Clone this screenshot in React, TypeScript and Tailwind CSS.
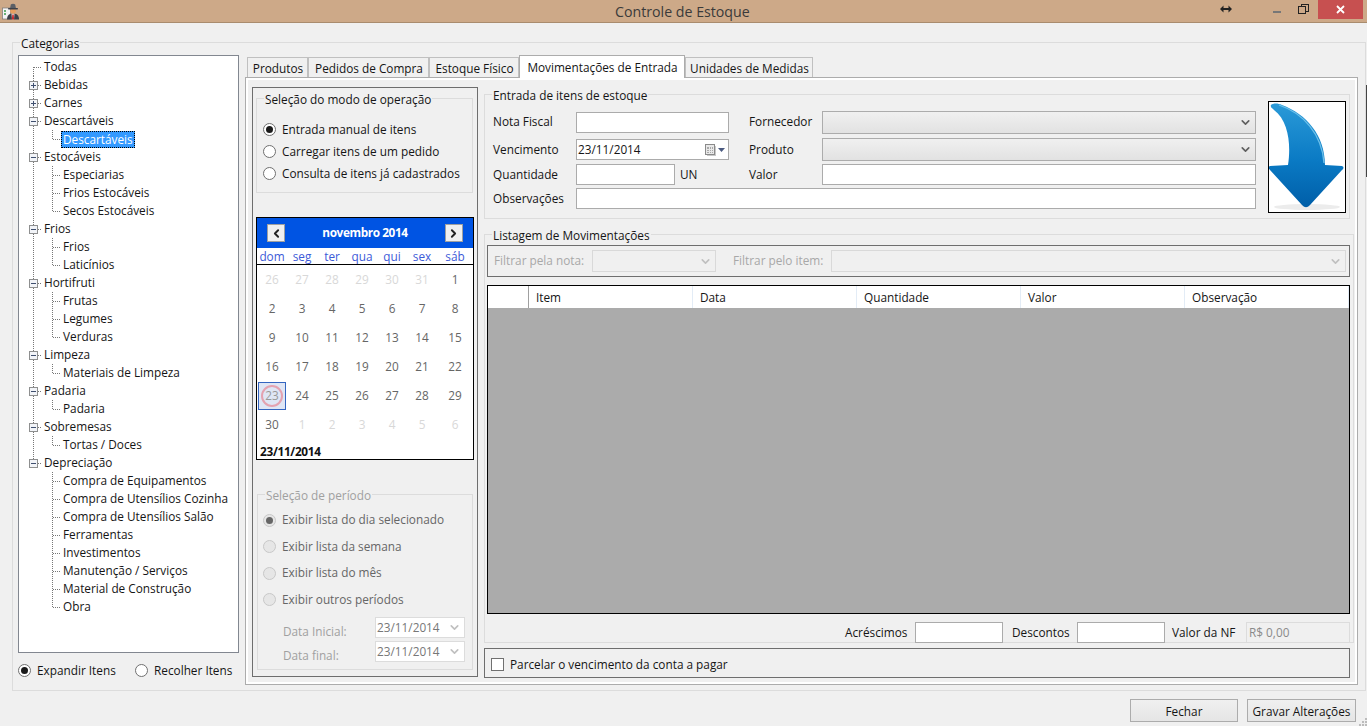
import { ReactNode } from "react";
import { ChevronDown, ChevronLeft, ChevronRight } from "lucide-react";

type Node = { name: string; box?: "+" | "-"; children?: string[] };

const tree: Node[] = [
  { name: "Todas" },
  { name: "Bebidas", box: "+" },
  { name: "Carnes", box: "+" },
  { name: "Descartáveis", box: "-", children: ["Descartáveis"] },
  { name: "Estocáveis", box: "-", children: ["Especiarias", "Frios Estocáveis", "Secos Estocáveis"] },
  { name: "Frios", box: "-", children: ["Frios", "Laticínios"] },
  { name: "Hortifruti", box: "-", children: ["Frutas", "Legumes", "Verduras"] },
  { name: "Limpeza", box: "-", children: ["Materiais de Limpeza"] },
  { name: "Padaria", box: "-", children: ["Padaria"] },
  { name: "Sobremesas", box: "-", children: ["Tortas / Doces"] },
  {
    name: "Depreciação",
    box: "-",
    children: [
      "Compra de Equipamentos",
      "Compra de Utensílios Cozinha",
      "Compra de Utensílios Salão",
      "Ferramentas",
      "Investimentos",
      "Manutenção / Serviços",
      "Material de Construção",
      "Obra",
    ],
  },
];

const tabs = [
  { name: "Produtos", w: "w-[61px]" },
  { name: "Pedidos de Compra", w: "w-[121px]" },
  { name: "Estoque Físico", w: "w-[90px]" },
  { name: "Movimentações de Entrada", w: "w-[166px]", active: true },
  { name: "Unidades de Medidas", w: "w-[128px]" },
];

const weekDays = ["dom", "seg", "ter", "qua", "qui", "sex", "sáb"];
const prevDays = [26, 27, 28, 29, 30, 31];
const monthDays = Array.from({ length: 30 }, (_, i) => i + 1);
const nextDays = [1, 2, 3, 4, 5, 6];

const columns = ["Item", "Data", "Quantidade", "Valor", "Observação"];

function GroupBox({ title, className, disabled, children }: { title: string; className: string; disabled?: boolean; children: ReactNode }) {
  return (
    <div className={`border border-[#dcdcdc] ${className}`}>
      <div className={`-mt-[8px] ml-[7px] h-[18px] w-fit bg-[#f0f0f0] px-[1px] leading-[16px] ${disabled ? "text-[#a0a0a0]" : ""}`}>{title}</div>
      {children}
    </div>
  );
}

function Radio({ checked, disabled }: { checked?: boolean; disabled?: boolean }) {
  return (
    <span
      className={`flex h-[13px] w-[13px] shrink-0 items-center justify-center rounded-full border ${
        disabled ? "border-[#c8c8c8] bg-[#e6e6e6]" : "border-[#707070] bg-white"
      }`}
    >
      {checked && <span className={`h-[7px] w-[7px] rounded-full ${disabled ? "bg-[#666666]" : "bg-[#1a1a1a]"}`} />}
    </span>
  );
}

function TreeLines({ box, child, last, lastChild, first }: { box?: string; child?: boolean; last?: boolean; lastChild?: boolean; first?: boolean }) {
  return (
    <svg width={child ? 42 : 25} height={18} className="shrink-0" shapeRendering="crispEdges">
      {!(child && last) && (
        <line x1={14.5} x2={14.5} y1={first ? 9 : 0} y2={last && !child ? 9 : 18} stroke="#777" strokeDasharray="1 1" />
      )}
      {child ? (
        <>
          <line x1={33.5} x2={33.5} y1={0} y2={lastChild ? 9 : 18} stroke="#777" strokeDasharray="1 1" />
          <line x1={34} x2={41} y1={9.5} y2={9.5} stroke="#777" strokeDasharray="1 1" />
        </>
      ) : (
        <line x1={15} x2={23} y1={9.5} y2={9.5} stroke="#777" strokeDasharray="1 1" />
      )}
      {box && (
        <>
          <rect x={10.5} y={5.5} width={8} height={8} fill="#f2f4f8" stroke="#8e8f8f" />
          <line x1={12} x2={17} y1={9.5} y2={9.5} stroke="#3f4f6f" />
          {box === "+" && <line x1={14.5} x2={14.5} y1={7} y2={12} stroke="#3f4f6f" />}
        </>
      )}
    </svg>
  );
}

function Field({ className }: { className: string }) {
  return <div className={`border border-[#ababab] bg-white ${className}`} />;
}

function Combo({ className, disabled, value }: { className: string; disabled?: boolean; value?: string }) {
  return (
    <div
      className={`flex items-center justify-between border pr-[3px] ${
        disabled ? "border-[#d9d9d9] bg-[#f0f0f0]" : "border-[#acacac] bg-gradient-to-b from-[#f0f0f0] to-[#e2e2e2]"
      } ${className}`}
    >
      <span>{value}</span>
      <ChevronDown size={13} strokeWidth={3} className={disabled ? "text-[#c0c0c0]" : "text-[#606060]"} />
    </div>
  );
}

function DownArrow() {
  return (
    <svg width={76} height={110} viewBox="1 1 76 110">
      <defs>
        <linearGradient id="arrowFill" x1="0" y1="0" x2="0" y2="1">
          <stop offset="0" stopColor="#2a9ad8" />
          <stop offset="0.55" stopColor="#0a7ac4" />
          <stop offset="1" stopColor="#005ea8" />
        </linearGradient>
      </defs>
      <ellipse cx="39" cy="106" rx="33" ry="3" fill="#ececec" />
      <path
        d="M3 4 C5 2 10 2 14 4 C38 13 57 34 57 64 L74 65 C76 66 76 67 74 69 L42 104 C39 107 37 107 34 104 L2 69 C0 67 0 66 2 65 L20 64 C23 45 21 20 6 9 C4 7 2 6 3 4 Z"
        fill="url(#arrowFill)"
      />
      <path d="M11 4 C35 12 54 33 56 62" fill="none" stroke="#6cc0ea" strokeWidth="1.3" />
    </svg>
  );
}

function CalendarGlyph() {
  return (
    <svg width={11} height={12} viewBox="0 0 11 12" shapeRendering="crispEdges">
      <rect x={0.5} y={0.5} width={9} height={10} fill="#e8e8e8" stroke="#8a8a8a" />
      <rect x={2} y={3} width={6} height={6} fill="#a8a8a8" />
      <path d="M4 3v6M6 3v6M2 5h6M2 7h6" stroke="#e8e8e8" />
      <path d="M10.5 2v9.5H2" fill="none" stroke="#c8c8c8" />
    </svg>
  );
}

function TitleIcon() {
  return (
    <svg width={17} height={17} viewBox="0 0 17 17">
      <rect x={0.5} y={5} width={8} height={11} fill="#f4f4f4" stroke="#777" strokeWidth={0.7} />
      <path d="M2 8h2M2 11h2" stroke="#3a9a4a" strokeWidth={1.4} />
      <path d="M5 16.500c0-4 2-6 6-6s6 2 6 6z" fill="#3c4048" />
      <path d="M9.500 10.500h3l-.5 6h-2z" fill="#f0f0f0" />
      <path d="M10.300 11.500h1.400l.4 5h-2.200z" fill="#c8282c" />
      <circle cx={11} cy={8} r={2.800} fill="#e8a060" />
      <path d="M8 5.500 8.800 1.500c1-1 3.400-1 4.400 0l.8 4z" fill="#5a5f66" />
      <rect x={6} y={5} width={10} height={1.400} rx={0.7} fill="#3c4048" />
    </svg>
  );
}

export default function App() {
  return (
    <div className="relative flex h-[726px] w-[1367px] flex-col overflow-hidden bg-[#f0f0f0] font-['Open_Sans','Noto_Sans',sans-serif] text-[11.8px] text-[#151515]">
      {/* Title bar */}
      <div className="flex h-[23px] shrink-0 items-start border-b border-[#a98c6e] bg-[#cda988]">
        <div className="mt-[3px] ml-[2px] w-[18px]">
          <TitleIcon />
        </div>
        <div className="flex-1 pl-[595px] text-[14.200px] leading-[24px] text-[#3a3a3a]">Controle de Estoque</div>
        <div className="flex items-start">
          <svg width={12} height={8} viewBox="0 0 12 8" className="mt-[5px] mr-[41px] text-[#222]">
            <path d="M0 4l3.500-3.500v2.500h5v-2.500l3.500 3.500-3.500 3.500v-2.500h-5v2.500z" fill="currentColor" />
          </svg>
          <div className="mt-[11px] mr-[17px] h-[2px] w-[8px] bg-[#777777]" />
          <svg width={11} height={10} viewBox="0 0 11 10" className="mt-[4px] mr-[9px]" shapeRendering="crispEdges">
            <rect x={0.5} y={2.5} width={7} height={7} fill="none" stroke="#222" />
            <path d="M0 2h8M3 2V0.500h7.500v7H8" fill="none" stroke="#222" />
          </svg>
          <div className="flex h-[19px] w-[45px] items-center justify-center bg-[#c75050] text-white">
            <svg width={9} height={9} viewBox="0 0 9 9">
              <path d="M1 1l7 7M8 1l-7 7" stroke="white" strokeWidth={1.8} />
            </svg>
          </div>
          <div className="w-[4px]" />
        </div>
      </div>

      {/* Categorias */}
      <div className="mt-[19px] ml-[12px]">
        <GroupBox title="Categorias" className="h-[649px] w-[1354px]">
          <div className="flex pl-[5px]">
            <div className="mt-[2px] w-[221px]">
              <div className="h-[598px] border border-[#828790] bg-white pt-[2px]">
                {tree.map((node, i) => {
                  const last = i === tree.length - 1;
                  return (
                    <div key={node.name}>
                      <div className="flex h-[18px] items-center">
                        <TreeLines box={node.box} first={i === 0} last={last} />
                        <span>{node.name}</span>
                      </div>
                      {node.children?.map((c, j) => {
                        const selected = node.name === "Descartáveis";
                        return (
                          <div key={c} className="flex h-[18px] items-center">
                            <TreeLines child last={last} lastChild={j === node.children!.length - 1} />
                            <span
                              className={
                                selected
                                  ? "border border-dotted border-black bg-[#3399ff] px-[1px] leading-[15px] text-white"
                                  : "pl-[2px]"
                              }
                            >
                              {c}
                            </span>
                          </div>
                        );
                      })}
                    </div>
                  );
                })}
              </div>
              <div className="mt-[9px] flex items-center">
                <Radio checked />
                <span className="ml-[6px] w-[98px]">Expandir Itens</span>
                <Radio />
                <span className="ml-[6px]">Recolher Itens</span>
              </div>
            </div>

            {/* Tabs */}
            <div className="ml-[6px] mt-[2px] w-[1113px]">
              <div className="flex h-[22px] items-end pl-[2px]">
                {tabs.map((t) => (
                  <div
                    key={t.name}
                    className={`${t.w} relative shrink-0 border border-b-0 pl-[1px] text-center ${
                      t.active
                        ? "z-10 -mb-[1px] h-[23px] border-[#acacac] bg-white leading-[22px]"
                        : "h-[20px] border-[#c0c0c0] bg-[#f0f0f0] leading-[20px]"
                    }`}
                  >
                    {t.name}
                  </div>
                ))}
              </div>
              <div className="h-[608px] border border-[#acacac] bg-white p-[2px]">
                <div className="flex h-full bg-[#f0f0f0] pt-[7px] pl-[4px]">
                  {/* Left column */}
                  <div className="h-[590px] w-[226px] shrink-0 border border-[#6e6e6e] pt-[10px] pl-[3px]">
                    <GroupBox title="Seleção do modo de operação" className="h-[95px] w-[217px] ">
                      <div className="mt-[14px] flex flex-col gap-[9px] pl-[6px]">
                        {["Entrada manual de itens", "Carregar itens de um pedido", "Consulta de itens já cadastrados"].map((t, i) => (
                          <div key={t} className="flex h-[13px] items-center">
                            <Radio checked={i === 0} />
                            <span className="ml-[6px]">{t}</span>
                          </div>
                        ))}
                      </div>
                    </GroupBox>

                    {/* Calendar */}
                    <div className="mt-[24px] h-[243px] w-[218px] border border-black bg-white">
                      <div className="flex h-[30px] items-center justify-between bg-[#0054e3] px-[10px]">
                        <div className="flex h-[18px] w-[18px] items-center justify-center border border-[#a0a0a0] bg-[#f0f0f0]">
                          <ChevronLeft size={13} strokeWidth={3.500} className="text-[#222]" />
                        </div>
                        <span className="font-bold tracking-[-0.4px] text-white">novembro 2014</span>
                        <div className="flex h-[18px] w-[18px] items-center justify-center border border-[#a0a0a0] bg-[#f0f0f0]">
                          <ChevronRight size={13} strokeWidth={3.500} className="text-[#222]" />
                        </div>
                      </div>
                      <div className="grid h-[17px] grid-cols-[repeat(6,30px)_1fr] border-b border-black text-center leading-[17px] text-[#3c5ad8]">
                        {weekDays.map((d) => (
                          <span key={d}>{d}</span>
                        ))}
                      </div>
                      <div className="grid grid-cols-[repeat(6,30px)_1fr] grid-rows-[repeat(6,29px)] items-center text-center text-[#666666]">
                        {prevDays.map((d) => (
                          <span key={`p${d}`} className="text-[#d8d8d8]">{d}</span>
                        ))}
                        {monthDays.map((d) =>
                          d === 23 ? (
                            <span key={d} className="flex h-[28px] w-[28px] items-center justify-center justify-self-center border border-[#3465c0] bg-[#dfe6f5] text-[#999999]">
                              <span className="flex h-[22px] w-[22px] items-center justify-center rounded-full border-2 border-[#e4a2b0]">{d}</span>
                            </span>
                          ) : (
                            <span key={d}>{d}</span>
                          )
                        )}
                        {nextDays.map((d) => (
                          <span key={`n${d}`} className="text-[#d8d8d8]">{d}</span>
                        ))}
                      </div>
                      <div className="mt-[4px] pl-[3px] font-bold tracking-[-0.3px] leading-[16px] text-[#111]">23/11/2014</div>
                    </div>

                    <GroupBox title="Seleção de período" disabled className="mt-[34px] ml-[1px] h-[176px] w-[216px]">
                      <div className="mt-[2px] flex flex-col pl-[5px] text-[#666666]">
                        {["Exibir lista do dia selecionado", "Exibir lista da semana", "Exibir lista do mês", "Exibir outros períodos"].map((t, i) => (
                          <div key={t} className="flex h-[26.500px] items-center">
                            <Radio checked={i === 0} disabled />
                            <span className="ml-[6px]">{t}</span>
                          </div>
                        ))}
                      </div>
                      <div className="mt-[4px] flex flex-col gap-[3px] pl-[25px] text-[#a0a0a0]">
                        {["Data Inicial:", "Data final:"].map((l) => (
                          <div key={l} className="flex h-[21px] items-center">
                            <span className="mt-[9px] w-[92px]">{l}</span>
                            <Combo disabled value="23/11/2014" className="h-[21px] w-[90px] !border-[#dcdcdc] !bg-white pl-[1px] text-[#777777]" />
                          </div>
                        ))}
                      </div>
                    </GroupBox>
                  </div>

                  {/* Right column */}
                  <div className="ml-[6px] w-[870px] shrink-0 pt-[7px]">
                    <GroupBox title="Entrada de itens de estoque" className="h-[125px] w-[866px]">
                      <div className="flex">
                        <div className="mt-[6px] w-[771px] pl-[8px]">
                          <div className="flex h-[22px] items-center">
                            <span className="w-[83px]">Nota Fiscal</span>
                            <Field className="h-[21px] w-[153px]" />
                            <span className="ml-[20px] w-[73px]">Fornecedor</span>
                            <Combo className="h-[23px] w-[434px]" />
                          </div>
                          <div className="mt-[5px] flex h-[23px] items-center">
                            <span className="w-[83px]">Vencimento</span>
                            <div className="flex h-[21px] w-[153px] items-center border border-[#ababab] bg-white pr-[3px] pl-[1px]">
                              <span className="flex-1">23/11/2014</span>
                              <CalendarGlyph />
                              <svg width={7} height={4} viewBox="0 0 7 4" className="ml-[2px]">
                                <path d="M0 0h7l-3.500 4z" fill="#4a5a80" />
                              </svg>
                            </div>
                            <span className="ml-[20px] w-[73px]">Produto</span>
                            <Combo className="h-[23px] w-[434px]" />
                          </div>
                          <div className="mt-[3px] flex h-[21px] items-center">
                            <span className="w-[83px]">Quantidade</span>
                            <Field className="h-[21px] w-[99px]" />
                            <span className="ml-[5px] w-[69px]">UN</span>
                            <span className="w-[73px]">Valor</span>
                            <Field className="h-[21px] w-[434px]" />
                          </div>
                          <div className="mt-[3px] flex h-[21px] items-center">
                            <span className="w-[83px]">Observações</span>
                            <Field className="h-[21px] w-[680px]" />
                          </div>
                        </div>
                        <div className="-mt-[4px] ml-[12px] flex h-[112px] w-[78px] items-center justify-center border border-black bg-white">
                          <DownArrow />
                        </div>
                      </div>
                    </GroupBox>

                    <GroupBox title="Listagem de Movimentações" className="mt-[15px] h-[409px] w-[870px]">
                      <div className="ml-[2px] flex h-[32px] w-[863px] items-center border border-[#6e6e6e] pl-[6px] text-[#a8a8a8]">
                        <span className="w-[98px]">Filtrar pela nota:</span>
                        <Combo disabled className="h-[22px] w-[124px]" />
                        <span className="ml-[17px] w-[98px]">Filtrar pelo item:</span>
                        <Combo disabled className="h-[22px] w-[515px]" />
                      </div>
                      <div className="mt-[8px] ml-[2px] flex h-[329px] w-[863px] flex-col border border-black bg-[#ababab]">
                        <div className="flex h-[22px] shrink-0 bg-white">
                          <div className="w-[41px] border-r border-[#a0a0a0]" />
                          {columns.map((c) => (
                            <div key={c} className="w-[164px] border-r border-[#e3ecf6] pl-[7px] leading-[23px]">
                              {c}
                            </div>
                          ))}
                        </div>
                      </div>
                      <div className="mt-[8px] flex h-[21px] w-[865px] items-center justify-end">
                        <span className="w-[70px]">Acréscimos</span>
                        <Field className="h-[21px] w-[88px]" />
                        <span className="ml-[9px] w-[65px]">Descontos</span>
                        <Field className="h-[21px] w-[88px]" />
                        <span className="ml-[7px] w-[74px]">Valor da NF</span>
                        <div className="h-[21px] w-[104px] border border-[#dcdcdc] bg-[#f0f0f0] pl-[2px] leading-[19px] text-[#8a8a8a]">R$ 0,00</div>
                      </div>
                    </GroupBox>

                    <div className="mt-[5px] flex h-[30px] w-[866px] items-center border border-[#6e6e6e] pt-[3px] pl-[6px]">
                      <span className="h-[13px] w-[13px] border border-[#707070] bg-white" />
                      <span className="ml-[6px]">Parcelar o vencimento da conta a pagar</span>
                    </div>
                  </div>
                </div>
              </div>
            </div>
          </div>
        </GroupBox>
      </div>

      {/* Footer */}
      <div className="mt-[8px] flex justify-end gap-[9px] pr-[11px]">
        <div className="h-[23px] w-[108px] border border-[#acacac] bg-gradient-to-b from-[#f0f0f0] to-[#e5e5e5] text-center leading-[23px]">Fechar</div>
        <div className="h-[23px] w-[109px] border border-[#acacac] bg-gradient-to-b from-[#f0f0f0] to-[#e5e5e5] text-center leading-[23px]">Gravar Alterações</div>
      </div>

      {/* edge of the window behind, size grip */}
      <div className="absolute top-[85px] right-0 h-[92px] w-[1px] bg-[#444444]" />
      <svg width={8} height={8} viewBox="0 0 8 8" className="absolute right-0 bottom-0" shapeRendering="crispEdges">
        <path d="M6 0h2v2H6zM3 3h2v2H3zM6 3h2v2H6zM0 6h2v2H0zM3 6h2v2H3zM6 6h2v2H6z" fill="#bcbcbc" />
      </svg>
    </div>
  );
}
